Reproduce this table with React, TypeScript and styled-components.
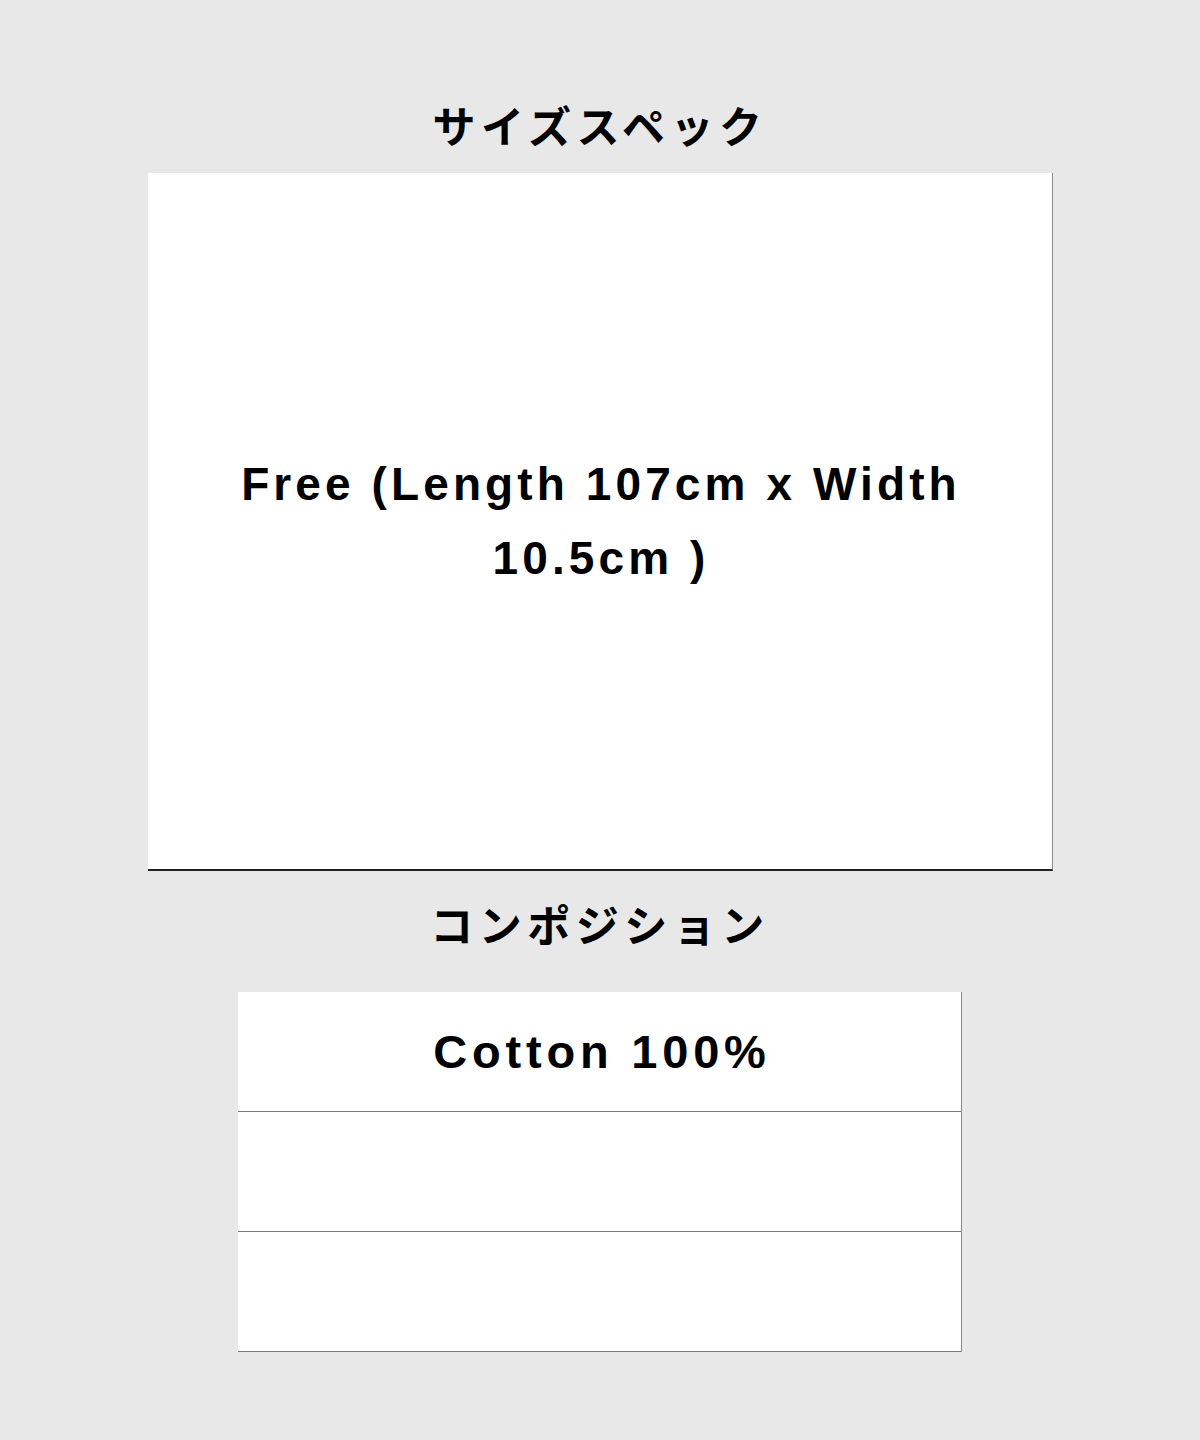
import styled, { createGlobalStyle } from 'styled-components';

const GlobalStyle = createGlobalStyle`
  html, body {
    margin: 0;
    padding: 0;
    background: #e8e8e8;
  }
  body {
    font-family: 'Liberation Sans', 'Noto Sans CJK JP', sans-serif;
    color: #000;
  }
`;

const Page = styled.div`
  width: 1200px;
  height: 1440px;
  display: flex;
  flex-direction: column;
  align-items: center;
  padding-top: 99px;
  box-sizing: border-box;
`;

const Heading = styled.h2`
  margin: 0;
  height: 50px;
  font-family: 'Noto Sans CJK JP', sans-serif;
  font-size: 43px;
  font-weight: 700;
  line-height: 50px;
  letter-spacing: 5.5px;
  text-align: center;
`;

const SpecBox = styled.div`
  margin-top: 24px;
  width: 764px;
  height: 696px;
  padding: 0 70px;
  background: #fff;
  border-right: 1px solid #8a8a8a;
  border-bottom: 2px solid #222;
  display: flex;
  align-items: center;
  justify-content: center;
`;

const SpecText = styled.p`
  margin: 0;
  font-family: 'Liberation Sans', Arial, sans-serif;
  font-size: 46px;
  font-weight: 700;
  line-height: 74px;
  letter-spacing: 4.1px;
  padding-left: 3px;
  text-align: center;
`;

const CompHeading = styled(Heading)`
  margin-top: 27px;
`;

const Table = styled.div`
  margin-top: 44px;
  width: 723px;
  background: #fff;
  border-right: 1px solid #8a8a8a;
  display: flex;
  flex-direction: column;
`;

const Row = styled.div`
  height: 119px;
  padding-left: 5px;
  border-bottom: 1px solid #7a7a7a;
  display: flex;
  align-items: center;
  justify-content: center;
  font-family: 'Liberation Sans', Arial, sans-serif;
  font-size: 47px;
  font-weight: 700;
  letter-spacing: 4.8px;
`;

const rows = ['Cotton 100%', '', ''];

export default function App() {
  return (
    <Page>
      <GlobalStyle />
      <Heading>サイズスペック</Heading>
      <SpecBox>
        <SpecText>Free (Length 107cm x Width 10.5cm )</SpecText>
      </SpecBox>
      <CompHeading>コンポジション</CompHeading>
      <Table>
        {rows.map((r, i) => (
          <Row key={i}>{r}</Row>
        ))}
      </Table>
    </Page>
  );
}
